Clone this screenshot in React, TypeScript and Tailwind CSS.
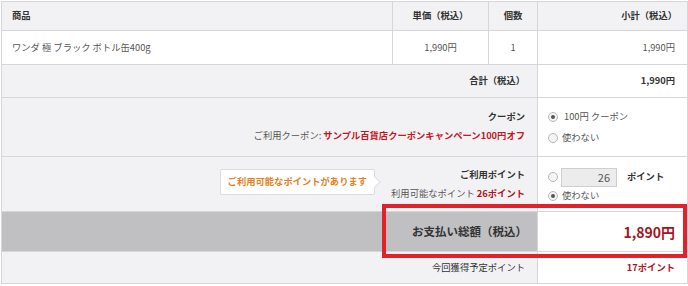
const font = { fontFamily: '"Noto Sans CJK JP", "Liberation Sans", sans-serif' };

function Radio({ checked }: { checked?: boolean }) {
  return (
    <span className="inline-flex h-[10px] w-[10px] shrink-0 items-center justify-center rounded-full border border-[#b8b8bc] bg-[#f4f4f6]">
      {checked && <span className="h-[4px] w-[4px] rounded-full bg-[#555]" />}
    </span>
  );
}

const cell = "border border-[#d6d6da]";

export default function App() {
  return (
    <div className="relative ml-px mt-px w-[686px] text-[9.3px] leading-none text-[#555]" style={font}>
      <table className="w-[686px] table-fixed border-collapse">
        <colgroup>
          <col className="w-[391px]" />
          <col className="w-[96px]" />
          <col className="w-[49px]" />
          <col className="w-[150px]" />
        </colgroup>
        <tbody>
          <tr className="h-[29px] bg-[#f2f2f4] font-bold text-[#333]">
            <td className={`${cell} pl-[10px]`}>商品</td>
            <td className={`${cell} text-center`}>単価（税込）</td>
            <td className={`${cell} text-center`}>個数</td>
            <td className={`${cell} pr-[10px] text-right`}>小計（税込）</td>
          </tr>
          <tr className="h-[34px] bg-white">
            <td className={`${cell} pl-[10px]`}>ワンダ 極 ブラック ボトル缶400g</td>
            <td className={`${cell} text-center`}>1,990円</td>
            <td className={`${cell} text-center`}>1</td>
            <td className={`${cell} pr-3 text-right`}>1,990円</td>
          </tr>
          <tr className="h-[33px]">
            <td colSpan={3} className={`${cell} bg-[#f2f2f4] pr-[12px] text-right font-bold text-[#333]`}>
              合計（税込）
            </td>
            <td className={`${cell} bg-white pr-3 text-right font-bold text-[#333]`}>1,990円</td>
          </tr>
          <tr className="h-[59px]">
            <td colSpan={3} className={`${cell} bg-[#f2f2f4] pr-3 text-right`}>
              <div className="mb-[9px] mt-[-2px] font-bold text-[#333]">クーポン</div>
              <div>
                ご利用クーポン: <span className="font-bold text-[#c8161e]">サンプル百貨店クーポンキャンペーン100円オフ</span>
              </div>
            </td>
            <td className={`${cell} bg-white pl-[10px]`}>
              <div className="mb-[11px] flex items-center gap-[6px]">
                <Radio checked />
                <span>100円 クーポン</span>
              </div>
              <div className="flex items-center gap-[4px]">
                <Radio />
                <span>使わない</span>
              </div>
            </td>
          </tr>
          <tr className="h-[55px]">
            <td colSpan={3} className={`${cell} bg-[#f2f2f4] pr-3`}>
              <div className="flex items-center justify-end">
                <div className="relative mr-[16px] mt-[-4px] flex h-[26px] items-center rounded-[2px] border border-[#dcdcdc] bg-white px-[7px] font-bold text-[#e5801e]">
                  ご利用可能なポイントがあります
                  <span className="absolute right-[-5px] top-[8px] h-[8px] w-[8px] rotate-45 border-r border-t border-[#dcdcdc] bg-white" />
                </div>
                <div className="text-right">
                  <div className="mb-[10px] font-bold text-[#333]">ご利用ポイント</div>
                  <div>
                    利用可能なポイント <span className="font-bold text-[#b0131d]">26ポイント</span>
                  </div>
                </div>
              </div>
            </td>
            <td className={`${cell} bg-white pl-[10px]`}>
              <div className="mb-[4px] flex items-center">
                <Radio />
                <span className="ml-[3px] flex h-[19px] w-[56px] items-center justify-end border border-[#cfcfcf] bg-[#ececec] pr-[6px] text-[11px]">
                  26
                </span>
                <span className="ml-[10px] font-bold text-[#333]">ポイント</span>
              </div>
              <div className="flex items-center gap-[4px]">
                <Radio checked />
                <span>使わない</span>
              </div>
            </td>
          </tr>
          <tr className="h-[40px]">
            <td colSpan={3} className={`${cell} bg-[#c0c0c2] pr-[10px] text-right text-[11.5px] font-bold text-[#333]`}>
              お支払い総額（税込）
            </td>
            <td className={`${cell} bg-white pr-3 text-right text-[14px] font-bold text-[#a8131d]`}>1,890円</td>
          </tr>
          <tr className="h-[32px]">
            <td colSpan={3} className={`${cell} bg-[#f2f2f4] pr-3 text-right text-[#333]`}>
              今回獲得予定ポイント
            </td>
            <td className={`${cell} bg-white pr-3 text-right font-bold text-[#b0131d]`}>17ポイント</td>
          </tr>
        </tbody>
      </table>
      <div className="pointer-events-none absolute left-[381px] top-[203px] h-[54px] w-[305px] border-4 border-[#e3212b]" />
    </div>
  );
}
